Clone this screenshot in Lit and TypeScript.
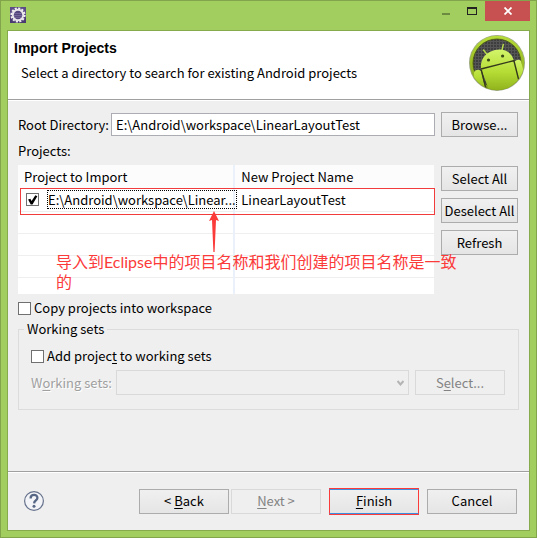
import { LitElement, html, css, svg } from "lit";
import { customElement, state } from "lit/decorators.js";

const eclipseIcon = svg`
  <rect width="16" height="16" fill="#5b4b86"/>
  <rect y="9" width="16" height="7" fill="#4a3a72"/>
  <circle cx="8" cy="8" r="6.6" fill="none" stroke="#f1eff2" stroke-width="2" stroke-dasharray="2.1 1.35"/>
  <circle cx="8" cy="8" r="5.2" fill="#55467d" stroke="#e9e6ea" stroke-width="2"/>
  <path d="M4 6.5h8M3.6 8.5h8.8M4.2 10.3h7.6" stroke="#8377a6" stroke-width=".7"/>`;

const androidLogo = svg`
  <defs>
    <linearGradient id="ring" x2="0" y2="1"><stop offset="0" stop-color="#b5dc38"/><stop offset="1" stop-color="#7f9d16"/></linearGradient>
    <linearGradient id="bot" x2="0" y2="1"><stop offset="0" stop-color="#d2f56a"/><stop offset=".5" stop-color="#b4dc34"/><stop offset="1" stop-color="#87a817"/></linearGradient>
    <pattern id="mesh" width="3" height="3" patternUnits="userSpaceOnUse"><rect width="3" height="3" fill="#3e3e3e"/><path d="M0 .5h3M.5 0v3" stroke="#555" stroke-width="1"/></pattern>
    <clipPath id="disc"><circle cx="28" cy="28" r="27"/></clipPath>
  </defs>
  <circle cx="28" cy="28" r="28" fill="#a0a889"/>
  <circle cx="28" cy="28" r="27.2" fill="url(#ring)"/>
  <circle cx="28" cy="28" r="24" fill="url(#mesh)" stroke="#46500f" stroke-width=".8"/>
  <g clip-path="url(#disc)">
    <path d="M14.5 15l4 5M34.3 9.5l-1.4 6" stroke="#b7dc4b" stroke-width="1.4" stroke-linecap="round"/>
    <path d="M12 34C11 24 17 17 26 15s17 2 19 11L53 52 22 60Z" fill="url(#bot)"/>
    <path d="M5 37q3-4 7-1l6 24H4ZM45 27q4-4 7-1l5 20-5 6Z" fill="url(#bot)"/>
    <path d="M12 34l33.5-8.5M12.3 35L18 58M45 26l5.5 22" fill="none" stroke="#34391c" stroke-width="1.4"/>
    <circle cx="19.5" cy="25" r="1.6" fill="#3b4b16"/><circle cx="33.6" cy="21" r="1.6" fill="#3b4b16"/>
  </g>`;

@customElement("app-root")
export class AppRoot extends LitElement {
  @state() private projects = [
    { path: "E:\\Android\\workspace\\Linear...", name: "LinearLayoutTest", checked: true },
  ];

  static styles = css`
    :host {
      display: block;
      font: 13px/18px "Noto Sans CJK SC", "Noto Sans", sans-serif;
      color: #000;
    }
    * { box-sizing: border-box; }
    .window {
      display: flex;
      flex-direction: column;
      min-height: 100vh;
      padding: 0 6px 6px;
      background: #a2cd5f;
      border: 1px solid #82a44b;
    }
    .titlebar { display: flex; justify-content: space-between; height: 29px; }
    .app-icon { width: 16px; height: 16px; margin: 6px 0 0 3px; }
    .controls { display: flex; }
    .control { display: flex; border: 0; padding: 0; height: 20px; width: 26px; background: none; align-items: center; justify-content: center; }
    .close { width: 45px; background: #c75050; }
    .dialog {
      flex: 1;
      display: flex;
      flex-direction: column;
      border: 1px solid #86ab4d;
      background: #efefef;
    }
    .head {
      display: flex;
      justify-content: space-between;
      height: 69px;
      padding: 4px 4px 0 6px;
      background: #fff;
      border-bottom: 1px solid #a0a0a0;
    }
    h1 { margin: 4px 0 7px; font: bold 14px/18px "Liberation Sans", sans-serif; }
    .head p { margin: 0 0 0 7px; }
    .logo { width: 56px; height: 56px; }
    .content { flex: 1; padding: 11px 10px 8px; border-top: 1px solid #fff; }
    .directory { display: flex; align-items: center; gap: 5px; }
    .directory label { width: 88px; white-space: nowrap; }
    input, button, select { font: inherit; color: inherit; border-radius: 0; margin: 0; }
    .path { flex: 1; min-width: 0; height: 23px; padding: 0 4px; border: 1px solid #abadb3; background: #fff; }
    .btn {
      height: 25px;
      padding: 0;
      text-align: center;
      border: 1px solid #acacac;
      background: linear-gradient(#f0f0f0, #e5e5e5);
    }
    .btn:disabled { color: #838383; border-color: #d9d9d9; background: #efefef; }
    .side { width: 77px; flex: none; }
    .directory .side { margin: 0 1px; }
    .caption { margin: 5px 0; }
    .projects { display: flex; gap: 7px; padding-right: 1px; }
    .list { position: relative; flex: 1; }
    table { width: 100%; table-layout: fixed; border-collapse: collapse; background: #fff; }
    .first { width: 52%; }
    th { height: 24px; padding: 0 6px; text-align: left; font-weight: normal; background: #fcfcfc; }
    td { height: 22px; padding: 0 0 0 6px; border-bottom: 1px solid #efefef; white-space: nowrap; }
    th + th, td + td { border-left: 2px solid #eaf1fb; }
    tbody tr:last-child td { height: 17px; border-bottom: 0; }
    .item { display: flex; align-items: center; gap: 8px; margin: 0 2px; height: 21px; }
    .focus { flex: 1; height: 19px; line-height: 17px; border: 1px dotted #000; }
    input[type="checkbox"] {
      appearance: none;
      flex: none;
      width: 13px;
      height: 13px;
      border: 1px solid #707070;
      background: #fff;
    }
    input[type="checkbox"]:checked::before {
      content: "";
      display: block;
      height: 11px;
      background: #000;
      clip-path: polygon(10% 48%, 30% 42%, 42% 62%, 76% 10%, 94% 18%, 50% 94%, 34% 94%);
    }
    .actions { display: flex; flex-direction: column; gap: 7px; padding-top: 1px; }
    .row-mark { position: absolute; left: 2px; right: -1px; top: 23px; height: 27px; border: 1px solid #f03c3c; pointer-events: none; }
    .arrow { position: absolute; left: 191px; top: 46px; width: 10px; height: 41px; }
    .note {
      position: absolute;
      left: 38px;
      top: 87px;
      width: 404px;
      margin: 0;
      color: #fb3a3a;
      font: 16px/20px Lato, "Noto Sans CJK SC", sans-serif;
      word-break: break-all;
      pointer-events: none;
    }
    .check { display: flex; align-items: center; gap: 3px; }
    .copy { margin-top: 5px; }
    fieldset { margin: 3px 0 0; padding: 9px 13px 14px 12px; border: 1px solid #dcdcdc; min-width: 0; }
    legend { padding: 0 3px; margin-left: -7px; }
    .sets { display: flex; align-items: center; gap: 6px; margin-top: 5px; }
    .sets label { width: 79px; color: #a0a0a0; text-shadow: 1px 1px #fff; white-space: nowrap; }
    .combo { position: relative; flex: 1; display: flex; }
    select { appearance: none; width: 100%; height: 25px; border: 1px solid #d9d9d9; background: #efefef; opacity: 1; }
    .chevron { position: absolute; right: 5px; top: 10px; width: 7px; height: 6px; pointer-events: none; }
    .wide { width: 90px; flex: none; }
    .foot {
      display: flex;
      align-items: center;
      height: 59px;
      padding: 0 12px 0 15px;
      border-top: 1px solid #a0a0a0;
      box-shadow: inset 0 1px #fff;
    }
    .help { display: flex; border: 0; padding: 0; background: none; margin-right: auto; }
    .help svg { width: 22px; height: 22px; }
    .nav { display: flex; gap: 2px; margin-right: 8px; }
    .ending { display: flex; gap: 8px; }
    .default { border-color: #3c8ee0 #fb3a3a; box-shadow: 0 -1px #fb3a3a, 0 1px #fb3a3a; }
    u { text-underline-offset: 2px; text-decoration-thickness: 1px; }
  `;

  private toggle(index: number) {
    this.projects = this.projects.map((p, i) => (i === index ? { ...p, checked: !p.checked } : p));
  }

  render() {
    return html`
      <main class="window">
        <header class="titlebar">
          <svg class="app-icon" viewBox="0 0 16 16">${eclipseIcon}</svg>
          <div class="controls">
            <button class="control" aria-label="Minimize"><svg width="8" height="12"><path d="M0 9h8" stroke="#6c8b40" stroke-width="2"/></svg></button>
            <button class="control" aria-label="Maximize"><svg width="10" height="8"><path d="M0 0h10v8H0ZM1 2v5h8V2Z" fill="#222" fill-rule="evenodd"/></svg></button>
            <button class="control close" aria-label="Close"><svg width="8" height="8"><path d="M.5.5l7 7M7.5.5l-7 7" stroke="#fff" stroke-width="1.8"/></svg></button>
          </div>
        </header>
        <section class="dialog">
          <div class="head">
            <div>
              <h1>Import Projects</h1>
              <p>Select a directory to search for existing Android projects</p>
            </div>
            <svg class="logo" viewBox="0 0 56 56">${androidLogo}</svg>
          </div>
          <div class="content">
            <div class="directory">
              <label for="root">Root Directory:</label>
              <input id="root" class="path" type="text" value="E:\\Android\\workspace\\LinearLayoutTest" />
              <button class="btn side">Browse...</button>
            </div>
            <div class="caption">Projects:</div>
            <div class="projects">
              <div class="list">
                <table>
                  <thead><tr><th class="first">Project to Import</th><th>New Project Name</th></tr></thead>
                  <tbody>
                    ${this.projects.map((p, i) => html`
                      <tr>
                        <td><div class="item">
                          <input type="checkbox" aria-label=${p.name} .checked=${p.checked} @change=${() => this.toggle(i)} />
                          <span class="focus">${p.path}</span>
                        </div></td>
                        <td>${p.name}</td>
                      </tr>`)}
                    ${[1, 2, 3, 4].map(() => html`<tr><td></td><td></td></tr>`)}
                  </tbody>
                </table>
                <div class="row-mark"></div>
                <svg class="arrow" viewBox="0 0 10 41"><path d="M5 0l5 10-3-1L5.6 41H4.4L3 9 0 10Z" fill="#fb3a3a"/></svg>
                <p class="note">导入到Eclipse中的项目名称和我们创建的项目名称是一致的</p>
              </div>
              <div class="actions">
                <button class="btn side">Select All</button>
                <button class="btn side">Deselect All</button>
                <button class="btn side">Refresh</button>
              </div>
            </div>
            <label class="check copy"><input type="checkbox" />Copy projects into workspace</label>
            <fieldset>
              <legend>Working sets</legend>
              <label class="check"><input type="checkbox" /><span>Add projec<u>t</u> to working sets</span></label>
              <div class="sets">
                <label for="sets">W<u>o</u>rking sets:</label>
                <div class="combo">
                  <select id="sets" disabled></select>
                  <svg class="chevron" viewBox="0 0 7 6"><path d="M.5 1l3 3.5 3-3.5" fill="none" stroke="#b4b4b4" stroke-width="2"/></svg>
                </div>
                <button class="btn wide" disabled>S<u>e</u>lect...</button>
              </div>
            </fieldset>
          </div>
          <footer class="foot">
            <button class="help" aria-label="Help">
              <svg viewBox="0 0 22 22">
                <circle cx="11" cy="11" r="9.4" fill="#f3f4f7" stroke="#66728c" stroke-width="1.2"/>
                <path d="M7.6 8.4C7.6 3.6 14.6 4 14.4 8c-.1 2.4-3.2 2.6-3.3 5.4" fill="none" stroke="#566685" stroke-width="2.3"/>
                <circle cx="11" cy="16.3" r="1.5" fill="#566685"/>
              </svg>
            </button>
            <div class="nav">
              <button class="btn wide">&lt; <u>B</u>ack</button>
              <button class="btn wide" disabled><u>N</u>ext &gt;</button>
            </div>
            <div class="ending">
              <button class="btn wide default"><u>F</u>inish</button>
              <button class="btn wide">Cancel</button>
            </div>
          </footer>
        </section>
      </main>`;
  }
}
